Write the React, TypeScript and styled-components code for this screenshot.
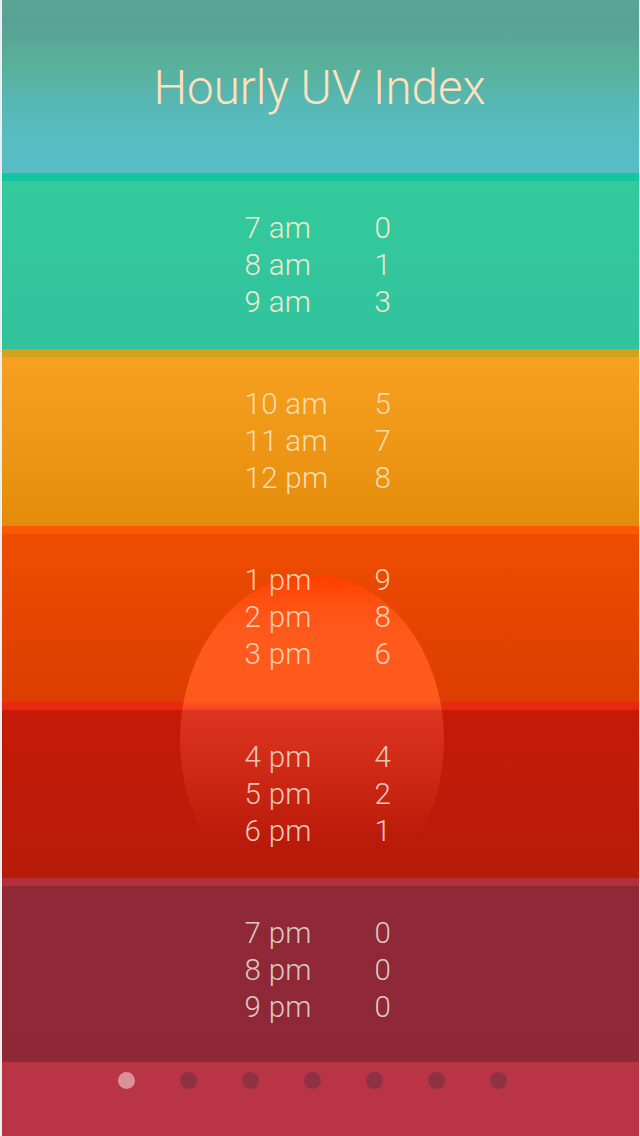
import styled, { createGlobalStyle } from 'styled-components';

type Band = {
  strip: string;
  top: string;
  bottom: string;
  text: string;
  extra: number;
  rows: [string, string][];
};

const bands: Band[] = [
  {
    strip: '#12c6a0',
    top: '#34ca9c',
    bottom: '#32c39e',
    text: '#f1ead0',
    extra: 0,
    rows: [['7 am', '0'], ['8 am', '1'], ['9 am', '3']],
  },
  {
    strip: '#d1a220',
    top: '#f8a121',
    bottom: '#e48c0a',
    text: '#f8dcae',
    extra: 0,
    rows: [['10 am', '5'], ['11 am', '7'], ['12 pm', '8']],
  },
  {
    strip: '#fc5a00',
    top: '#ef4d00',
    bottom: '#dc3d00',
    text: '#f6d0b2',
    extra: 0,
    rows: [['1 pm', '9'], ['2 pm', '8'], ['3 pm', '6']],
  },
  {
    strip: '#e8290e',
    top: '#c71a08',
    bottom: '#b61b0a',
    text: '#ebc7b9',
    extra: 0,
    rows: [['4 pm', '4'], ['5 pm', '2'], ['6 pm', '1']],
  },
  {
    strip: '#b52e3a',
    top: '#8f2837',
    bottom: '#8e2837',
    text: '#dcc7c0',
    extra: 8,
    rows: [['7 pm', '0'], ['8 pm', '0'], ['9 pm', '0']],
  },
];

const pages = 7;

const App = () => {
  return (
    <>
      <GlobalStyle />
      <Screen>
        <Header>
          <Title>Hourly UV Index</Title>
        </Header>
        <Forecast>
          <Sun />
          {bands.map((band) => (
            <BandBlock key={band.rows[0][0]}>
              <Strip $color={band.strip} />
              <BandBody $top={band.top} $bottom={band.bottom} $extra={band.extra}>
                <HourTable $color={band.text}>
                  {band.rows.map(([hour, value]) => (
                    <HourRow key={hour}>
                      <Hour>{hour}</Hour>
                      <Value>{value}</Value>
                    </HourRow>
                  ))}
                </HourTable>
              </BandBody>
            </BandBlock>
          ))}
        </Forecast>
        <Footer>
          <Dots>
            {Array.from({ length: pages }).map((_, i) => (
              <Dot key={i} $active={i === 0} />
            ))}
          </Dots>
        </Footer>
      </Screen>
    </>
  );
};

export default App;

const GlobalStyle = createGlobalStyle`
  html, body {
    margin: 0;
    padding: 0;
    background: #eef0ef;
  }
  body {
    font-family: Roboto, "Liberation Sans", sans-serif;
  }
`;

const Screen = styled.main`
  width: 637px;
  height: 1136px;
  margin-left: 2px;
  display: flex;
  flex-direction: column;
  overflow: hidden;
`;

const Header = styled.header`
  height: 173px;
  flex: none;
  display: flex;
  align-items: center;
  justify-content: center;
  background: linear-gradient(
    180deg,
    #5ca697 0px,
    #58a195 18px,
    #59a797 40px,
    #59b097 60px,
    #58b4a8 86px,
    #57b9b9 112px,
    #57bdc3 140px,
    #57bcc4 173px
  );
`;

const Title = styled.h1`
  margin: 2px 0 0 -2px;
  font-family: Roboto, "Liberation Sans", sans-serif;
  font-weight: 300;
  font-size: 47.5px;
  color: #fde2c0;
`;

const Forecast = styled.section`
  position: relative;
  display: flex;
  flex-direction: column;
`;

const Sun = styled.div`
  position: absolute;
  left: 178px;
  top: 402px;
  width: 264px;
  height: 330px;
  border-radius: 50%;
  z-index: 0;
  background: linear-gradient(
    180deg,
    #ff3f00 0px,
    #ff5212 30px,
    #ff5a1c 60px,
    #ff5a1c 126px,
    rgba(255, 95, 70, 0.38) 136px,
    rgba(255, 95, 70, 0.2) 200px,
    rgba(255, 95, 70, 0) 265px
  );
`;

const BandBlock = styled.div`
  display: flex;
  flex-direction: column;
`;

const Strip = styled.div<{ $color: string }>`
  height: 8px;
  background: ${(p) => p.$color};
`;

const BandBody = styled.div<{ $top: string; $bottom: string; $extra: number }>`
  height: 168.3px;
  padding-bottom: ${(p) => p.$extra}px;
  display: flex;
  align-items: center;
  justify-content: center;
  background: linear-gradient(180deg, ${(p) => p.$top}, ${(p) => p.$bottom});
`;

const HourTable = styled.div<{ $color: string }>`
  position: relative;
  z-index: 1;
  display: flex;
  flex-direction: column;
  width: 150px;
  margin-left: -2px;
  color: ${(p) => p.$color};
  font-family: Roboto, "Liberation Sans", sans-serif;
  font-weight: 300;
  font-size: 29.5px;
  letter-spacing: 0.3px;
  line-height: 37px;
`;

const HourRow = styled.div`
  display: grid;
  grid-template-columns: 130px 20px;
`;

const Hour = styled.span`
  white-space: nowrap;
`;

const Value = styled.span`
  white-space: nowrap;
`;

const Footer = styled.footer`
  flex: 1;
  background: #b93445;
  padding-top: 10px;
`;

const Dots = styled.div`
  display: flex;
  gap: 45px;
  padding-left: 116px;
`;

const Dot = styled.span<{ $active: boolean }>`
  width: 17px;
  height: 17px;
  border-radius: 50%;
  background: ${(p) => (p.$active ? '#dc9099' : '#8e3143')};
`;
